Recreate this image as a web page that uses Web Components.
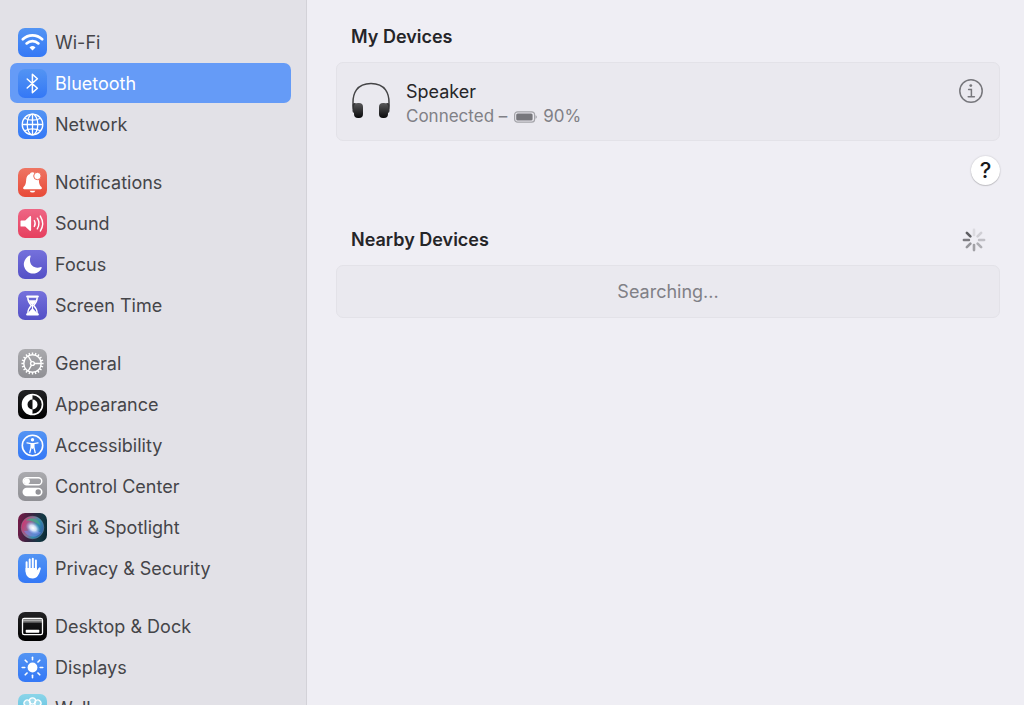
<!DOCTYPE html>
<html lang="en">
<head>
<meta charset="utf-8">
<meta name="viewport" content="width=device-width, initial-scale=1">
<title>Bluetooth</title>
<style>
    body {
        margin: 0;
        background: #efeef4;
        color: #252528;
        font: 18px/24px Inter, "Liberation Sans", sans-serif;
    }
</style>
</head>
<body>
<settings-window>
    <side-bar slot="sidebar">
        <side-group>
            <side-item icon="wifi">Wi-Fi</side-item>
            <side-item icon="bluetooth" selected>Bluetooth</side-item>
            <side-item icon="network">Network</side-item>
        </side-group>
        <side-group>
            <side-item icon="notifications">Notifications</side-item>
            <side-item icon="sound">Sound</side-item>
            <side-item icon="focus">Focus</side-item>
            <side-item icon="screentime">Screen Time</side-item>
        </side-group>
        <side-group>
            <side-item icon="general">General</side-item>
            <side-item icon="appearance">Appearance</side-item>
            <side-item icon="accessibility">Accessibility</side-item>
            <side-item icon="control">Control Center</side-item>
            <side-item icon="siri">Siri &amp; Spotlight</side-item>
            <side-item icon="privacy">Privacy &amp; Security</side-item>
        </side-group>
        <side-group>
            <side-item icon="desktop">Desktop &amp; Dock</side-item>
            <side-item icon="displays">Displays</side-item>
            <side-item icon="wallpaper">Wallpaper</side-item>
        </side-group>
    </side-bar>
    <device-section>
        <span slot="title">My Devices</span>
        <device-row battery="90%">Speaker</device-row>
        <help-button slot="footer"></help-button>
    </device-section>
    <device-section>
        <span slot="title">Nearby Devices</span>
        <busy-spinner slot="status"></busy-spinner>
        <empty-row>Searching...</empty-row>
    </device-section>
</settings-window>

<script>
const BLUE = 'linear-gradient(#5394f3, #3478f6)';
const INDIGO = 'linear-gradient(#7571dc, #5450c6)';
const GRAY = 'linear-gradient(#aaaaae, #8f8f94)';
const BLACK = 'linear-gradient(#222224, #000)';

// teeth of the General gear
const teeth = Array.from({ length: 20 }, (_, i) =>
    `<path d="M14.5 3.4v2.4" transform="rotate(${i * 18} 14.5 14.5)"/>`).join('');

const rays = Array.from({ length: 8 }, (_, i) =>
    `<path d="M14.5 4.2v2.6" transform="rotate(${i * 45} 14.5 14.5)"/>`).join('');

const petals = Array.from({ length: 8 }, (_, i) =>
    `<circle cx="14.5" cy="7" r="3.1" transform="rotate(${i * 45} 14.5 14.5)"/>`).join('');

// every icon is drawn on a 29 x 29 tile
const ICONS = {
    wifi: {
        tile: BLUE,
        art: `<g fill="none" stroke="#fff" stroke-width="2.7" stroke-linecap="round">
                <path d="M4.8 11.2a14 14 0 0 1 19.4 0"/>
                <path d="M8.6 15.4a8.6 8.6 0 0 1 11.8 0"/>
              </g>
              <path d="M14.5 22.6l-3-3.1a4.3 4.3 0 0 1 6 0z" fill="#fff"/>`
    },
    bluetooth: {
        tile: BLUE,
        art: `<path d="M9.2 10l10.2 9.2-5 4.6V5.2l5 4.6L9.2 19" fill="none" stroke="#fff"
                stroke-width="1.5" stroke-linejoin="round" stroke-linecap="round"/>`
    },
    network: {
        tile: BLUE,
        art: `<g fill="none" stroke="#fff" stroke-width="1.3">
                <circle cx="14.5" cy="14.5" r="10.3"/>
                <path d="M14.5 4.2v20.6M4.2 14.5h20.6"/>
                <ellipse cx="14.5" cy="14.5" rx="5.3" ry="10.3"/>
                <path d="M6.6 8.2c4.6 2.6 11.2 2.6 15.8 0M6.6 20.8c4.6-2.6 11.2-2.6 15.8 0"/>
              </g>`
    },
    notifications: {
        tile: 'linear-gradient(#ee7563, #e84a38)',
        art: `<path d="M14.5 4.2c-1.5 0-2.3.8-2.5 1.8-2.4.9-3.7 2.9-3.8 5.5-.2 4.2-.8 5.6-2.6 7.6-.9 1-.5 2.1.7 2.1h16.4c1.2 0 1.6-1.1.7-2.1-1.8-2-2.4-3.4-2.6-7.6-.1-2.6-1.4-4.6-3.8-5.5-.2-1-1-1.8-2.5-1.8z" fill="#fff"/>
              <circle cx="19.4" cy="8" r="3.7" fill="#fff" stroke="#ec6a58" stroke-width="1"/>
              <path d="M11.7 22.7h5.6a2.9 2.5 0 0 1-5.6 0z" fill="#fff"/>`
    },
    sound: {
        tile: 'linear-gradient(#ee6685, #e63f5e)',
        art: `<path d="M3.2 11.4h4l4.6-4.1c.6-.5 1.3-.2 1.3.6v13.2c0 .8-.7 1.1-1.3.6l-4.6-4.1h-4c-.4 0-.7-.3-.7-.7v-4.8c0-.4.3-.7.7-.7z" fill="#fff"/>
              <g fill="none" stroke="#fff" stroke-width="1.4" stroke-linecap="round">
                <path d="M16.3 11.5a6 6 0 0 1 0 6"/>
                <path d="M19.3 9.2a10 10 0 0 1 0 10.6"/>
                <path d="M22.3 7a14 14 0 0 1 0 15"/>
              </g>`
    },
    focus: {
        tile: INDIGO,
        art: `<path d="M11.8 5.6a9.3 9.3 0 1 0 11.9 12.3c.2-.6-.3-1-.8-.8-7.2 2.5-13-3.4-10.3-10.7.2-.6-.2-1-.8-.8z" fill="#fff"/>`
    },
    screentime: {
        tile: INDIGO,
        art: `<path d="M9.2 5.6h10.6M9.2 23.4h10.6" stroke="#fff" stroke-width="2.2" stroke-linecap="round"/>
              <path d="M9.8 6.5c0 4.3 1.3 5.6 3.6 8-2.3 2.4-3.6 3.7-3.6 8h9.4c0-4.3-1.3-5.6-3.6-8 2.3-2.4 3.6-3.7 3.6-8" fill="none" stroke="#fff" stroke-width="1.4"/>
              <path d="M10.8 9.3h7.4c-.6 2-1.7 3.1-3.1 4.5v4l3.3 3.5v1.2h-7.8v-1.2l3.3-3.5v-4c-1.4-1.4-2.5-2.5-3.1-4.5z" fill="#fff"/>`
    },
    general: {
        tile: GRAY,
        art: `<g fill="none" stroke="#fff" stroke-width="1.4">
                ${teeth}
                <circle cx="14.5" cy="14.5" r="8.7"/>
                <circle cx="14.5" cy="14.5" r="1.9"/>
                <path d="M16.4 14.5h6.8M13.5 12.8L10.2 7M13.5 16.2L10.2 22"/>
              </g>`
    },
    appearance: {
        tile: BLACK,
        art: `<circle cx="14.5" cy="14.5" r="10" fill="none" stroke="#fff" stroke-width="1.6"/>
              <path d="M14.5 4.5a10 10 0 0 0 0 20v-5a5 5 0 0 1 0-10z" fill="#fff"/>
              <path d="M14.5 9.5a5 5 0 0 1 0 10z" fill="#fff"/>`
    },
    accessibility: {
        tile: BLUE,
        art: `<circle cx="14.5" cy="14.5" r="10.2" fill="none" stroke="#fff" stroke-width="1.6"/>
              <circle cx="14.5" cy="8.8" r="1.7" fill="#fff"/>
              <path d="M9 11.9l4.2.7v3.4l-1.4 5.6M20 11.9l-4.2.7v3.4l1.4 5.6" fill="none" stroke="#fff" stroke-width="1.3" stroke-linecap="round" stroke-linejoin="round"/>
              <path d="M12.8 12h3.4v4.5l-1.7 1.4-1.7-1.4z" fill="#fff"/>`
    },
    control: {
        tile: GRAY,
        art: `<rect x="5.2" y="5.8" width="18.6" height="7" rx="3.5" fill="none" stroke="#fff" stroke-width="1.4"/>
              <circle cx="8.9" cy="9.3" r="3" fill="#fff"/>
              <rect x="4.5" y="15.8" width="20" height="8.4" rx="4.2" fill="#fff"/>
              <circle cx="20.2" cy="20" r="2.7" fill="#929297"/>`
    },
    siri: {
        tile: 'linear-gradient(100deg, #7a1a48, #362541 45%, #143945 75%, #08242f)',
        art: `<defs>
                <linearGradient id="orb" x1="0" y1=".3" x2="1" y2=".7">
                    <stop offset="0" stop-color="#d82f6d"/>
                    <stop offset=".4" stop-color="#8a6f96"/>
                    <stop offset=".65" stop-color="#3192ae"/>
                    <stop offset="1" stop-color="#325ba7"/>
                </linearGradient>
                <radialGradient id="glow">
                    <stop offset="0" stop-color="#fff"/>
                    <stop offset=".45" stop-color="#e6efff" stop-opacity=".85"/>
                    <stop offset="1" stop-color="#94b5ff" stop-opacity="0"/>
                </radialGradient>
              </defs>
              <circle cx="14.5" cy="14.5" r="11.3" fill="url(#orb)" stroke="#7796a0" stroke-opacity=".6" stroke-width=".7"/>
              <path d="M8 7.5c5-4.5 13-1.5 14.5 5-4.5-3.5-8.5-5-14.5-5z" fill="#44a984" opacity=".75"/>
              <path d="M6 18c4 .5 6-1.5 9-3.5 2 3 5 4 8 5-4 6-13 5.5-17-1.5z" fill="#7c86e6" opacity=".6"/>
              <ellipse cx="15" cy="15" rx="8" ry="5.5" fill="url(#glow)" transform="rotate(35 15 15)"/>`
    },
    privacy: {
        tile: BLUE,
        art: `<g fill="none" stroke="#fff" stroke-width="2" stroke-linecap="round">
                <path d="M8.6 8.2v9M11.7 5.4v10M14.8 4.8v10M17.9 6.5v9"/>
                <path d="M18.8 18.5l3-4.3"/>
              </g>
              <path d="M7.6 14h11.3v2.8l2.1-2.9 1.7.8c-1.5 5.6-3.4 9.8-8 9.8-4.8 0-7.1-3.2-7.1-7.5z" fill="#fff"/>`
    },
    desktop: {
        tile: BLACK,
        art: `<rect x="4.5" y="6.3" width="20" height="16.4" rx="1.8" fill="none" stroke="#fff" stroke-width="1.3"/>
              <path d="M5 8.1h19" stroke="#aaa" stroke-width="1.8"/>
              <path d="M5 9.9h19" stroke="#fff" stroke-width=".7"/>
              <rect x="7.7" y="17.8" width="13.6" height="2.9" rx=".6" fill="#fff"/>`
    },
    displays: {
        tile: BLUE,
        art: `<circle cx="14.5" cy="14.5" r="4.9" fill="#fff"/>
              <g stroke="#fff" stroke-width="1.6" stroke-linecap="round">${rays}</g>`
    },
    wallpaper: {
        tile: 'linear-gradient(#8bd5e9, #50b9dd)',
        art: `<g fill="#fff" fill-opacity=".3" stroke="#fff" stroke-width="1.3">${petals}</g>
              <circle cx="14.5" cy="14.5" r="2.5" fill="#fff"/>`
    }
};

function render(host, html) {
    const template = document.createElement('template');
    template.innerHTML = html;
    host.attachShadow({ mode: 'open' }).appendChild(template.content.cloneNode(true));
}

class SettingsWindow extends HTMLElement {
    constructor() {
        super();
        render(this, `
            <style>
                :host {
                    display: grid;
                    grid-template-columns: 307px minmax(0, 1fr);
                    height: 100vh;
                }
                main {
                    display: flex;
                    flex-direction: column;
                    gap: 42px;
                    padding: 24px 24px 24px 29px;
                    overflow: hidden;
                }
            </style>
            <slot name="sidebar"></slot>
            <main><slot></slot></main>
        `);
    }
}

class SideBar extends HTMLElement {
    constructor() {
        super();
        render(this, `
            <style>
                :host {
                    display: block;
                    overflow: hidden;
                    background: #e2e1e7;
                    border-right: 1px solid #d3d2d8;
                }
                nav {
                    display: flex;
                    flex-direction: column;
                    gap: 18px;
                    padding: 22px 15px 0 10px;
                }
            </style>
            <nav aria-label="Settings"><slot></slot></nav>
        `);
    }
}

class SideGroup extends HTMLElement {
    constructor() {
        super();
        render(this, `
            <style>
                :host {
                    display: flex;
                    flex-direction: column;
                    gap: 1px;
                }
            </style>
            <slot></slot>
        `);
    }
}

class SideItem extends HTMLElement {
    constructor() {
        super();
        render(this, `
            <style>
                :host {
                    display: block;
                    color: #454549;
                }
                :host([selected]) {
                    color: #fff;
                }
                a {
                    display: flex;
                    align-items: center;
                    gap: 8px;
                    height: 40px;
                    padding: 0 8px;
                    border-radius: 7px;
                    color: inherit;
                    text-decoration: none;
                }
                :host([selected]) a {
                    background: #659bf7;
                }
                span {
                    padding-top: 2px;
                }
            </style>
            <a href="#${this.getAttribute('icon')}">
                <app-icon name="${this.getAttribute('icon')}"></app-icon>
                <span><slot></slot></span>
            </a>
        `);
    }
}

class AppIcon extends HTMLElement {
    connectedCallback() {
        if (this.shadowRoot) return;
        const icon = ICONS[this.getAttribute('name')];
        render(this, `
            <style>
                :host {
                    display: block;
                    flex: none;
                    width: 29px;
                    height: 29px;
                    border-radius: 7px;
                    background: ${icon.tile};
                    overflow: hidden;
                }
                svg {
                    display: block;
                }
            </style>
            <svg width="29" height="29" viewBox="0 0 29 29" aria-hidden="true">${icon.art}</svg>
        `);
    }
}

class DeviceSection extends HTMLElement {
    constructor() {
        super();
        render(this, `
            <style>
                :host {
                    display: block;
                }
                header {
                    display: flex;
                    align-items: center;
                    justify-content: space-between;
                    padding: 0 14px 0 15px;
                    margin-bottom: 12px;
                }
                h2 {
                    margin: 0;
                    font-size: 18px;
                    line-height: 26px;
                    font-weight: 600;
                }
                .card {
                    border: 1px solid #e3e2e8;
                    border-radius: 7px;
                    background: #eae9ef;
                }
            </style>
            <header>
                <h2><slot name="title"></slot></h2>
                <slot name="status"></slot>
            </header>
            <div class="card"><slot></slot></div>
            <slot name="footer"></slot>
        `);
    }
}

class DeviceRow extends HTMLElement {
    constructor() {
        super();
        render(this, `
            <style>
                :host {
                    display: flex;
                    align-items: flex-start;
                    gap: 15px;
                    padding: 16px 16px 11px 14px;
                    line-height: 25px;
                }
                .text {
                    flex: 1;
                }
                .status {
                    display: flex;
                    align-items: center;
                    gap: 6px;
                    font-size: 17px;
                    color: #808086;
                }
                button {
                    padding: 0;
                    border: 0;
                    background: none;
                }
                svg {
                    display: block;
                }
            </style>
            <svg width="40" height="40" viewBox="0 0 40 40" aria-hidden="true">
                <defs>
                    <linearGradient id="cup" x1="0" y1="0" x2="0" y2="1">
                        <stop offset="0" stop-color="#59595b"/>
                        <stop offset="1" stop-color="#09090a"/>
                    </linearGradient>
                </defs>
                <path d="M2.5 30C0 13 7 4.5 20 4.5s20 8.5 17.5 25.5" fill="none" stroke="#444446" stroke-width="1.5"/>
                <rect x="1.5" y="24" width="4" height="10" rx="2" fill="#333335"/>
                <rect x="34.5" y="24" width="4" height="10" rx="2" fill="#333335"/>
                <rect x="3" y="24" width="9" height="15" rx="4" fill="url(#cup)"/>
                <rect x="28" y="24" width="9" height="15" rx="4" fill="url(#cup)"/>
            </svg>
            <div class="text">
                <div><slot></slot></div>
                <div class="status">
                    <span>Connected –</span>
                    <svg width="24" height="12" viewBox="0 0 24 12" role="img" aria-label="Battery">
                        <rect x="1.6" y=".8" width="20" height="10.4" rx="3" fill="none" stroke="#a4a4a9" stroke-width="1.2"/>
                        <rect x="3.2" y="2.4" width="16.4" height="7.2" rx="1.5" fill="#77777c"/>
                        <path d="M22.6 4.2c1.5.6 1.5 3 0 3.6z" fill="#96969b"/>
                    </svg>
                    <span>${this.getAttribute('battery')}</span>
                </div>
            </div>
            <button type="button" aria-label="Device info">
                <svg width="24" height="24" viewBox="0 0 24 24" fill="none" stroke="#77777c">
                    <circle cx="12" cy="12" r="11.2" stroke-width="1.5"/>
                    <circle cx="11.8" cy="6.6" r="1.4" fill="#77777c" stroke="none"/>
                    <path d="M9.6 10.4h2.8v7.3M9.2 17.8h6.2" stroke-width="1.5" stroke-linecap="round"/>
                </svg>
            </button>
        `);
    }
}

class EmptyRow extends HTMLElement {
    constructor() {
        super();
        render(this, `
            <style>
                :host {
                    display: block;
                    padding: 13px;
                    line-height: 25px;
                    text-align: center;
                    color: #808086;
                }
            </style>
            <slot></slot>
        `);
    }
}

class HelpButton extends HTMLElement {
    constructor() {
        super();
        render(this, `
            <style>
                :host {
                    display: flex;
                    justify-content: flex-end;
                    margin-top: 15px;
                }
                button {
                    width: 29px;
                    height: 29px;
                    padding: 0;
                    border: 0;
                    border-radius: 50%;
                    background: #fff;
                    box-shadow: 0 0 2px rgba(0, 0, 0, .2), 0 1px 1px rgba(0, 0, 0, .15);
                    color: #19191b;
                    font: 500 22px/29px Inter, "Liberation Sans", sans-serif;
                }
            </style>
            <button type="button" aria-label="Help">?</button>
        `);
    }
}

class BusySpinner extends HTMLElement {
    constructor() {
        super();
        // opacity of each spoke, clockwise from the top
        const shades = [.12, .2, .3, .42, .5, .58, .75, .95];
        const spokes = shades.map((o, i) =>
            `<path d="M12 1.9v5" opacity="${o}" transform="rotate(${i * 45} 12 12)"/>`).join('');
        render(this, `
            <style>
                :host {
                    display: block;
                }
                svg {
                    display: block;
                }
            </style>
            <svg width="24" height="24" viewBox="0 0 24 24" stroke="#57575b" stroke-width="2.6"
                stroke-linecap="round" role="img" aria-label="Searching">${spokes}</svg>
        `);
    }
}

customElements.define('settings-window', SettingsWindow);
customElements.define('side-bar', SideBar);
customElements.define('side-group', SideGroup);
customElements.define('side-item', SideItem);
customElements.define('app-icon', AppIcon);
customElements.define('device-section', DeviceSection);
customElements.define('device-row', DeviceRow);
customElements.define('empty-row', EmptyRow);
customElements.define('help-button', HelpButton);
customElements.define('busy-spinner', BusySpinner);
</script>
</body>
</html>
